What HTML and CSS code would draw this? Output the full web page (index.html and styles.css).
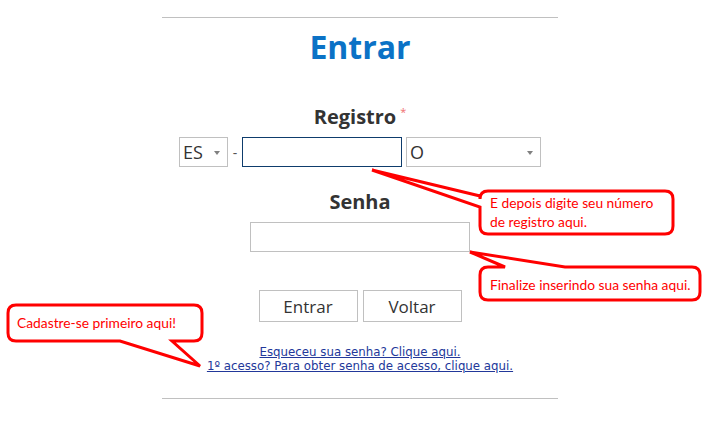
FILE: index.html
```html
<!DOCTYPE html>
<html lang="pt-BR">
<head>
  <meta charset="UTF-8">
  <title>Entrar</title>
  <link rel="stylesheet" href="styles.css">
</head>
<body>

<div class="login">
  <hr class="rule rule-top">
  <h1 class="title">Entrar</h1>

  <div class="field">
    <label class="label">Registro<span class="req">*</span></label>
    <div class="reg-row">
      <div class="select select-uf">ES<span class="arrow"></span></div>
      <span class="dash">-</span>
      <div class="input input-reg"></div>
      <div class="select select-cat">O<span class="arrow"></span></div>
    </div>
  </div>

  <div class="field field-senha">
    <label class="label">Senha</label>
    <div class="input input-senha"></div>
  </div>

  <div class="actions">
    <button class="btn">Entrar</button>
    <button class="btn">Voltar</button>
  </div>

  <div class="links">
    <a href="#">Esqueceu sua senha? Clique aqui. </a><br>
    <a href="#">1º acesso? Para obter senha de acesso, clique aqui.</a>
  </div>

  <hr class="rule rule-bottom">
</div>

<!-- balões de ajuda -->
<svg class="balloons" width="705" height="436" viewBox="0 0 705 436">
  <path d="M488 191 H665 Q673 191 673 199 V226 Q673 234 665 234 H488 Q480 234 480 226 V207 L372 170 L480 196 V199 Q480 191 488 191 Z"/>
  <path d="M488 267 H505 L470 252 L565 267 H692 Q700 267 700 275 V292 Q700 300 692 300 H488 Q480 300 480 292 V275 Q480 267 488 267 Z"/>
  <path d="M16 305 H194 Q202 305 202 313 V333 Q202 341 194 341 H172 L200 366 L120 341 H16 Q8 341 8 333 V313 Q8 305 16 305 Z"/>
</svg>
<div class="note note-reg">E depois digite seu número<br>de registro aqui.</div>
<div class="note note-senha">Finalize inserindo sua senha aqui.</div>
<div class="note note-cad">Cadastre-se primeiro aqui!</div>

</body>
</html>
```

FILE: styles.css
```css
body {
  margin: 0;
  background: #fff;
  font-family: "Open Sans", Arial, sans-serif;
  color: #333;
}
.login {
  width: 396px;
  margin-left: 162px;
  text-align: center;
}
.rule {
  border: none;
  height: 1px;
  background: #c0c0c0;
  margin: 0;
}
.rule-top {
  margin-top: 17px;
}
.title {
  margin: 9px 0 0;
  font-size: 32px;
  line-height: 40px;
  font-weight: 700;
  color: #0b72c6;
}
.field {
  margin-top: 33px;
}
.field-senha {
  margin-top: 23px;
}
.label {
  display: block;
  font-size: 20px;
  line-height: 24px;
  font-weight: 700;
  color: #333;
}
.req {
  color: #f07070;
  font-size: 11px;
  font-weight: 400;
  vertical-align: 8px;
  margin-left: 4px;
}
.reg-row {
  display: flex;
  justify-content: center;
  align-items: center;
  margin-top: 8px;
}
.select, .input {
  box-sizing: border-box;
  height: 30px;
  border: 1px solid #c0c0c0;
  background: #fff;
}
.select {
  position: relative;
  font-size: 18px;
  line-height: 28px;
  text-align: left;
  padding-left: 3px;
}
.select-uf { width: 49px; }
.select-cat { width: 135px; margin-left: 4px; }
.arrow {
  position: absolute;
  right: 7px;
  top: 13px;
  border-left: 3px solid transparent;
  border-right: 3px solid transparent;
  border-top: 4px solid #808080;
}
.dash {
  width: 14px;
  font-size: 14px;
  color: #555;
}
.input-reg {
  width: 160px;
  border: 1.5px solid #0e3c6c;
}
.input-senha {
  width: 220px;
  margin: 8px auto 0;
}
.actions {
  display: flex;
  justify-content: center;
  gap: 5px;
  margin-top: 38px;
}
.btn {
  width: 99px;
  height: 32px;
  background: #fff;
  border: 1px solid #c0c0c0;
  font-family: "Open Sans", Arial, sans-serif;
  font-size: 17px;
  color: #333;
  padding: 0;
}
.links {
  margin-top: 23px;
  font-family: "DejaVu Sans", Verdana, sans-serif;
  font-size: 11.8px;
  line-height: 14px;
}
.links a {
  color: #22389a;
}
.rule-bottom {
  margin-top: 25px;
}
.balloons {
  position: absolute;
  top: 0;
  left: 0;
  pointer-events: none;
}
.balloons path {
  fill: #fff;
  stroke: #ff0000;
  stroke-width: 3;
}
.note {
  position: absolute;
  font-family: Lato, "Open Sans", sans-serif;
  font-size: 13.8px;
  line-height: 19px;
  color: #ff0000;
  white-space: nowrap;
}
.note-reg { left: 490px; top: 193px; }
.note-senha { left: 490px; top: 275px; }
.note-cad { left: 17px; top: 313px; }
```
